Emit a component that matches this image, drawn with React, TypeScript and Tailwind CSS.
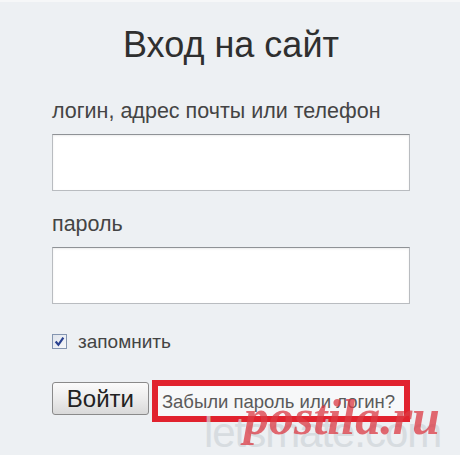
export default function App() {
  return (
    <div
      className="relative w-[460px] h-[455px] overflow-hidden bg-[#edf0f3] border-t-2 border-[#f6f7f8] text-[#333]"
      style={{ fontFamily: '"Liberation Sans", Arial, sans-serif' }}
    >
      <div className="flex flex-col pl-[52px] w-[410px]">
        {/* TITLE */}
        <h1 className="mt-[25px] text-center text-[36px] leading-[36px] font-normal text-[#2f2f2f]">
          Вход на сайт
        </h1>

        {/* LOGIN */}
        <label className="mt-[37px] text-[21.5px] leading-[22px] text-[#444]">
          логин, адрес почты или телефон
        </label>
        <input
          type="text"
          className="mt-[12px] h-[57px] w-[358px] bg-white border border-[#b9bcc0] border-t-[#8f9296] shadow-[inset_0_1px_2px_rgba(0,0,0,0.08)] outline-none"
        />

        {/* PASSWORD */}
        <label className="mt-[22px] text-[21.5px] leading-[22px] text-[#444]">пароль</label>
        <input
          type="password"
          className="mt-[12px] h-[57px] w-[358px] bg-white border border-[#b9bcc0] border-t-[#8f9296] shadow-[inset_0_1px_2px_rgba(0,0,0,0.08)] outline-none"
        />

        {/* REMEMBER */}
        <div className="mt-[28px] flex items-center gap-[11px]">
          <span className="flex items-center justify-center w-[15px] h-[15px] border border-[#8495b0] bg-gradient-to-br from-[#dfe4ec] to-[#f7f8fa]">
            <svg width="11" height="11" viewBox="0 0 10 10">
              <path d="M1.5 5 L4 8 L8.5 1.5" fill="none" stroke="#29418f" strokeWidth="2" />
            </svg>
          </span>
          <span className="text-[19px] leading-[19px] text-[#444]">запомнить</span>
        </div>

        {/* ACTIONS */}
        <div className="mt-[29px] flex items-start gap-[3px]">
          <button className="mt-[2px] w-[98px] h-[33px] rounded-[3px] border border-[#8a8a8a] bg-gradient-to-b from-[#fbfbfb] via-[#ececec] to-[#d9d9d9] text-[24px] leading-[24px] text-[#222]">
            Войти
          </button>
          <div className="w-[261px] h-[42px] border-[6px] border-[#e1222e] bg-[#f7f8f9] flex items-center pl-[4px]">
            <span className="text-[18.5px] leading-[19px] text-[#5a5a5a]">Забыли пароль или логин?</span>
          </div>
        </div>
      </div>

      {/* WATERMARKS */}
      <span className="absolute left-[204px] top-[410px] text-[42px] leading-[42px] text-[#cfd4d9] opacity-70 tracking-tight">
        letsmate.com
      </span>
      <span
        className="absolute left-[244px] top-[390px] text-[50px] leading-[50px] font-bold italic text-[#dc3a44] opacity-75"
        style={{ fontFamily: '"Liberation Serif", "Times New Roman", serif' }}
      >
        postila.ru
      </span>
    </div>
  );
}
